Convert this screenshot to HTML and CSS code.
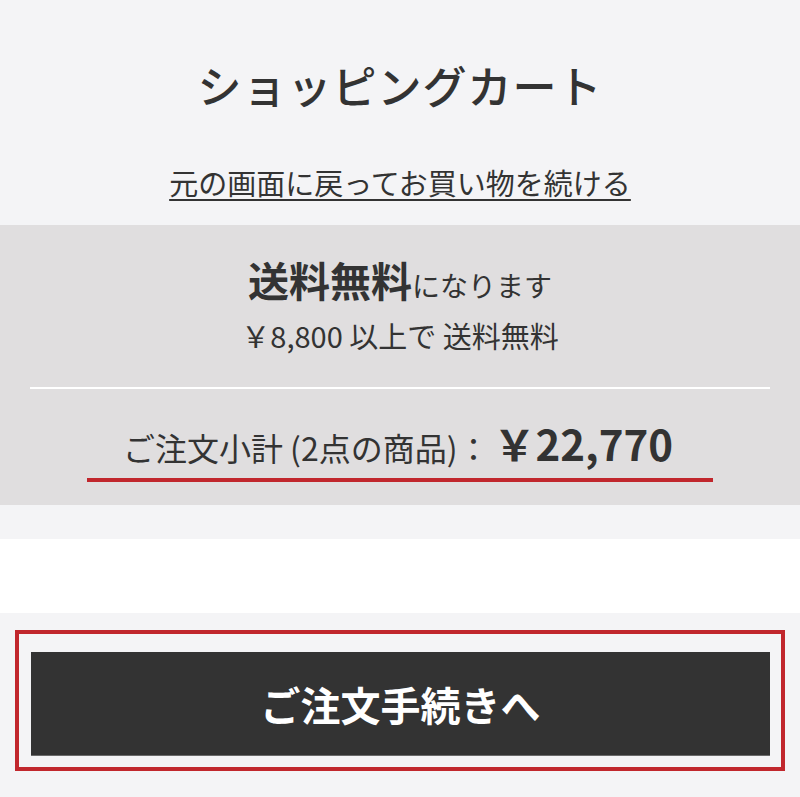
FILE: index.html
```html
<!DOCTYPE html>
<html lang="ja">
<head>
<meta charset="utf-8">
<title>ショッピングカート</title>
<link rel="stylesheet" href="styles.css">
</head>
<body>
<header class="cart-head">
  <h1 class="cart-title">ショッピングカート</h1>
  <a class="back-link" href="#">元の画面に戻ってお買い物を続ける</a>
</header>
<section class="summary">
  <p class="free-ship"><strong class="free-strong">送料無料</strong>になります</p>
  <p class="free-note">￥8,800 以上で 送料無料</p>
  <hr class="divider">
  <div class="subtotal-wrap">
    <p class="subtotal"><span class="subtotal-label">ご注文小計 (2点の商品)：</span><span class="subtotal-price">￥22,770</span></p>
  </div>
</section>
<div class="gap-light"></div>
<div class="gap-white"></div>
<div class="checkout">
  <div class="checkout-frame">
    <button class="checkout-btn" type="button">ご注文手続きへ</button>
  </div>
</div>
</body>
</html>
```

FILE: styles.css
```css
html, body {
  margin: 0;
  padding: 0;
}
body {
  background: #f4f4f6;
  color: #333333;
  font-family: "Noto Sans CJK JP", "Noto Sans", sans-serif;
}
.cart-head {
  height: 225px;
  box-sizing: border-box;
  padding-top: 52px;
  display: flex;
  flex-direction: column;
  align-items: center;
}
.cart-title {
  margin: 0;
  font-size: 44px;
  line-height: 66px;
  font-weight: 500;
  letter-spacing: 1px;
}
.back-link {
  margin-top: 44px;
  font-size: 29px;
  line-height: 40px;
  color: #333333;
  text-decoration: underline;
  text-decoration-thickness: 2px;
  text-underline-offset: 4px;
}
.summary {
  background: #e0dedf;
  height: 280px;
  box-sizing: border-box;
  padding-top: 29px;
  text-align: center;
}
.free-ship {
  margin: 0;
  font-size: 28px;
  line-height: 50px;
}
.free-strong {
  font-size: 41px;
  font-weight: 700;
}
.free-note {
  margin: 7px 0 0;
  font-size: 29px;
  line-height: 36px;
}
.divider {
  margin: 34px 30px 0;
  border: 0;
  height: 2px;
  background: #ffffff;
}
.subtotal-wrap {
  margin-top: 29px;
  display: flex;
  justify-content: center;
}
.subtotal {
  margin: 0;
  padding: 0 40px 6px 36px;
  border-bottom: 4px solid #c1272d;
  line-height: 50px;
  display: flex;
  align-items: baseline;
}
.subtotal-label {
  font-size: 32px;
}
.subtotal-price {
  font-size: 42px;
  font-weight: 700;
  margin-left: 4px;
}
.gap-light {
  height: 34px;
}
.gap-white {
  height: 74px;
  background: #ffffff;
}
.checkout {
  padding: 17px 15px 26px;
}
.checkout-frame {
  border: 4px solid #c1272d;
  padding: 18px 11px 11px 12px;
}
.checkout-btn {
  display: block;
  width: 100%;
  height: 104px;
  border: 0;
  border-bottom: 1px solid #6a6a6a;
  background: #333333;
  color: #ffffff;
  font-family: "Noto Sans CJK JP", "Noto Sans", sans-serif;
  font-size: 40px;
  font-weight: 700;
  cursor: pointer;
}
```
